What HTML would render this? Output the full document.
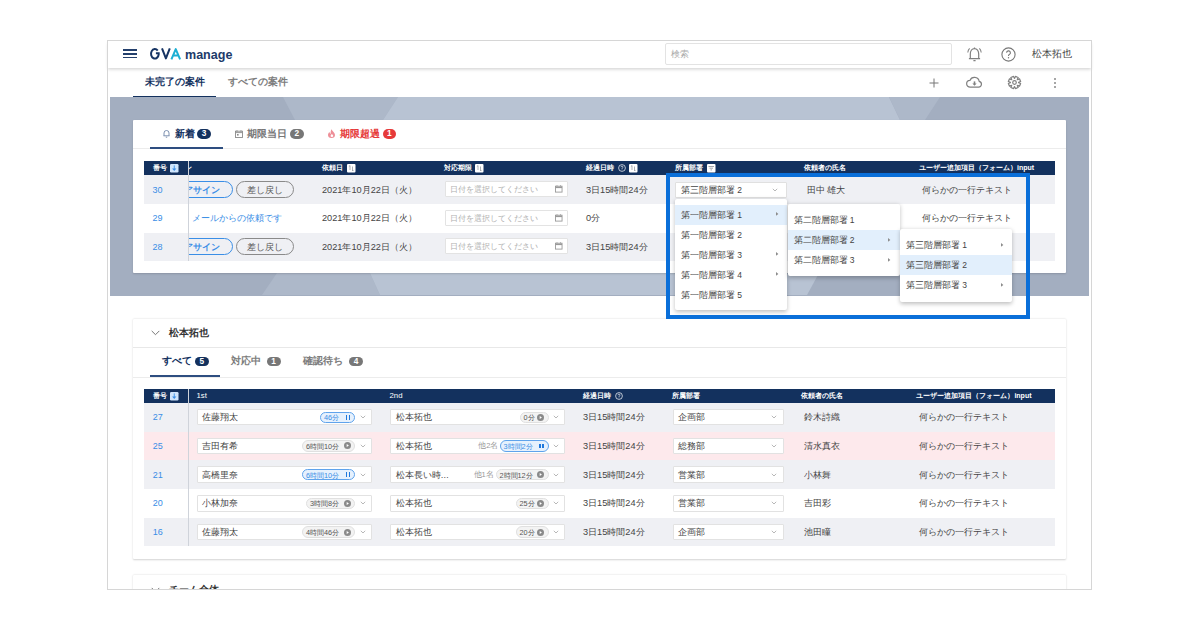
<!DOCTYPE html><html><head><meta charset="utf-8"><style>
*{margin:0;padding:0;box-sizing:border-box}
html,body{width:1200px;height:630px;background:#fff;overflow:hidden}
body{position:relative;font-family:"Liberation Sans",sans-serif;color:#333}
.a{position:absolute;white-space:nowrap}
svg{position:absolute;overflow:visible}
</style></head><body>
<div class="a" style="left:0;top:0;width:1200px;height:589px;overflow:hidden">
<div class="a" style="left:108px;top:41px;width:983px;height:27px;background:#fff;box-shadow:0 1.5px 3px rgba(0,0,0,.17)"></div>
<div class="a" style="left:123px;top:49.3px;width:13.5px;height:1.4px;background:#243f6c"></div>
<div class="a" style="left:123px;top:53.3px;width:13.5px;height:1.4px;background:#243f6c"></div>
<div class="a" style="left:123px;top:56.8px;width:13.5px;height:1.4px;background:#243f6c"></div>
<svg style="left:148px;top:46px" width="36" height="16" viewBox="0 0 36 16"><path d="M9.71 4.57A3.85 4.75 0 1 0 10.70 8.35V7.2H7.9" fill="none" stroke="#163463" stroke-width="2" stroke-linejoin="miter"/><path d="M14 2.4L17.9 12.4L21.8 2.4" fill="none" stroke="#163463" stroke-width="2" stroke-linejoin="round"/><path d="M23.4 13.3L27.75 3.1L32.1 13.3M25 9.4H30.5" fill="none" stroke="#1cafd3" stroke-width="2" stroke-linejoin="round"/></svg>
<div class="a" style="left:184.6px;top:45.5px;font-size:13.2px;line-height:18px;font-weight:bold;color:#1d3b6a;transform:scaleX(0.95);transform-origin:0 0">manage</div>
<div class="a" style="left:665px;top:43px;width:287px;height:21.5px;border:1px solid #e3e3e3;border-radius:2px;background:#fff"></div>
<div class="a" style="left:671px;top:48.0px;font-size:8.5px;line-height:12px;color:#aaa;font-weight:normal;">検索</div>
<svg style="left:967px;top:47px" width="15" height="15" viewBox="0 0 15 15"><path d="M7.5 0.4V1.6M3.3 11.6V7C3.3 4 5 1.6 7.5 1.6S11.7 4 11.7 7V11.6M1.9 11.7H13.1M6.4 13.6H8.6" fill="none" stroke="#808080" stroke-width="1.2"/><path d="M2.6 1.4Q0.9 3.2 0.8 5.6M12.4 1.4Q14.1 3.2 14.2 5.6" fill="none" stroke="#808080" stroke-width="1.05"/></svg>
<svg style="left:1001px;top:47px" width="15" height="15" viewBox="0 0 15 15"><circle cx="7.5" cy="7.5" r="6.6" fill="none" stroke="#777" stroke-width="1.1"/><path d="M5.6 5.8 a1.9 1.9 0 1 1 2.7 1.7 c-0.6 0.3 -0.8 0.7 -0.8 1.4" fill="none" stroke="#777" stroke-width="1.1"/><circle cx="7.5" cy="10.8" r="0.7" fill="#777"/></svg>
<div class="a" style="left:1032px;top:48.0px;font-size:10px;line-height:12px;color:#444;font-weight:normal;">松本拓也</div>
<div class="a" style="left:144.5px;top:76.0px;font-size:10px;line-height:12px;color:#13315e;font-weight:bold;">未完了の案件</div>
<div class="a" style="left:228px;top:76.0px;font-size:10px;line-height:12px;color:#7d7d7d;font-weight:bold;">すべての案件</div>
<div class="a" style="left:133px;top:95.5px;width:83px;height:1.6px;background:#13315e"></div>
<svg style="left:929px;top:78px" width="10" height="10" viewBox="0 0 10 10"><path d="M5 0.5V9.5M0.5 5H9.5" stroke="#777" stroke-width="1"/></svg>
<svg style="left:966px;top:77px" width="17" height="11" viewBox="0 0 17 11"><path d="M4.2 10.2H12.6a3 3 0 0 0 0.6-5.9a4.9 4.9 0 0 0-9.3-0.9a3.4 3.4 0 0 0 0.3 6.8z" fill="none" stroke="#808080" stroke-width="1.2"/><path d="M8.5 4.4V7.2" stroke="#808080" stroke-width="1.6"/><path d="M6.4 6.4L8.5 8.8L10.6 6.4z" fill="#808080"/></svg>
<svg style="left:1008px;top:76px" width="13" height="13" viewBox="0 0 13 13"><path d="M10.60 6.63 L12.63 7.44 L11.50 10.17 L9.49 9.30 L9.30 9.49 L10.17 11.50 L7.44 12.63 L6.63 10.60 L6.37 10.60 L5.56 12.63 L2.83 11.50 L3.70 9.49 L3.51 9.30 L1.50 10.17 L0.37 7.44 L2.40 6.63 L2.40 6.37 L0.37 5.56 L1.50 2.83 L3.51 3.70 L3.70 3.51 L2.83 1.50 L5.56 0.37 L6.37 2.40 L6.63 2.40 L7.44 0.37 L10.17 1.50 L9.30 3.51 L9.49 3.70 L11.50 2.83 L12.63 5.56 L10.60 6.37z" fill="none" stroke="#808080" stroke-width="1.2" stroke-linejoin="round"/><circle cx="6.5" cy="6.5" r="1.8" fill="none" stroke="#808080" stroke-width="1.2"/></svg>
<div class="a" style="left:1053.5px;top:77.55px;width:2.5px;height:2.5px;border-radius:50%;background:#888"></div>
<div class="a" style="left:1053.5px;top:81.55px;width:2.5px;height:2.5px;border-radius:50%;background:#888"></div>
<div class="a" style="left:1053.5px;top:85.55px;width:2.5px;height:2.5px;border-radius:50%;background:#888"></div>
<div class="a" style="left:110px;top:97px;width:979px;height:199px;background:#a3aec0"></div>
<svg style="left:0;top:0" width="1200" height="630" viewBox="0 0 1200 630"><polygon points="283,97 398,97 383,120 295,120" fill="#adb8c9"/><polygon points="398,97 889,97 900,120 383,120" fill="#b8c3d3"/><polygon points="889,97 940,97 925,120 900,120" fill="#adb8c9"/><polygon points="277,273 370,273 380,295 262,295" fill="#adb8c9"/><polygon points="370,273 819,273 807,295 380,295" fill="#b8c3d3"/></svg>
<div class="a" style="left:133px;top:120px;width:933px;height:153px;background:#fff;border-radius:1px;box-shadow:0 1px 2px rgba(0,0,0,.15)"></div>
<svg style="left:163px;top:129px" width="7" height="9" viewBox="0 0 7 9"><path d="M1 6.8V4a2.5 2.5 0 0 1 5 0v2.8M0.5 6.8h6M2.8 8.2h1.4" fill="none" stroke="#6f86a8" stroke-width="0.9"/></svg>
<div class="a" style="left:174.5px;top:127.5px;font-size:10px;line-height:12px;color:#13315e;font-weight:bold;">新着</div>
<div class="a" style="left:197px;top:129.3px;width:14px;height:9.4px;border-radius:5px;background:#13315e;color:#fff;font-size:8.3px;font-weight:bold;line-height:9.8px;text-align:center">3</div>
<svg style="left:235px;top:129.5px" width="8" height="8" viewBox="0 0 8 8"><rect x="0.5" y="1.2" width="7" height="6.3" fill="none" stroke="#8a8a8a" stroke-width="0.9"/><path d="M0.5 2.6h7M2 0.2v1.5M6 0.2v1.5" stroke="#8a8a8a" stroke-width="0.9"/><rect x="2" y="4" width="1.6" height="1.6" fill="#8a8a8a"/></svg>
<div class="a" style="left:247px;top:127.5px;font-size:10px;line-height:12px;color:#777;font-weight:bold;">期限当日</div>
<div class="a" style="left:290px;top:129.3px;width:13.5px;height:9.4px;border-radius:5px;background:#777;color:#fff;font-size:8.3px;font-weight:bold;line-height:9.8px;text-align:center">2</div>
<svg style="left:328px;top:129.2px" width="7" height="9" viewBox="0 0 7 9"><path fill-rule="evenodd" d="M3.4 0C3.7 1.8 7 3.6 7 6.1A3.5 2.9 0 0 1 0 6.1C0 4.6 0.8 3.6 1.5 3C1.6 4 2 4.6 2.6 4.9C2.6 3.1 2.8 1.4 3.4 0zM3.9 4.9C4.6 5.6 5.2 6.2 5.2 6.9A1.3 1.1 0 0 1 2.6 6.9C2.6 6.2 3.2 5.6 3.9 4.9z" fill="#ee8f98"/></svg>
<div class="a" style="left:339.5px;top:127.5px;font-size:10px;line-height:12px;color:#e63a3a;font-weight:bold;">期限超過</div>
<div class="a" style="left:382.5px;top:129.3px;width:13.5px;height:9.4px;border-radius:5px;background:#e63a3a;color:#fff;font-size:8.3px;font-weight:bold;line-height:9.8px;text-align:center">1</div>
<div class="a" style="left:133px;top:148px;width:933px;height:1px;background:#ececec"></div>
<div class="a" style="left:150px;top:146.5px;width:72.5px;height:2px;background:#2e4e80"></div>
<div class="a" style="left:144px;top:161px;width:910.7px;height:14px;background:#13315e"></div>
<div class="a" style="left:144px;top:175px;width:910.7px;height:29px;background:#eff0f4"></div>
<div class="a" style="left:144px;top:204px;width:910.7px;height:28.5px;background:#fff"></div>
<div class="a" style="left:144px;top:232.5px;width:910.7px;height:28.5px;background:#eff0f4"></div>
<div class="a" style="left:184.5px;top:161px;font-size:7px;line-height:14px;color:#fff;font-weight:bold">ン</div>
<div class="a" style="left:322px;top:161px;font-size:7px;line-height:14px;color:#fff;font-weight:bold">依頼日</div>
<svg style="left:346.7px;top:163.8px" width="8.5" height="8.5" viewBox="0 0 8.5 8.5"><rect width="8.5" height="8.5" rx="1" fill="#fff"/><path d="M3 1.5v4.5M1.9 2.6L3 1.5M5.5 7v-4.5M6.6 5.9L5.5 7" fill="none" stroke="#8a8f98" stroke-width="0.7"/></svg>
<div class="a" style="left:444px;top:161px;font-size:7px;line-height:14px;color:#fff;font-weight:bold">対応期限</div>
<svg style="left:475.3px;top:163.8px" width="8.5" height="8.5" viewBox="0 0 8.5 8.5"><rect width="8.5" height="8.5" rx="1" fill="#fff"/><path d="M3 1.5v4.5M1.9 2.6L3 1.5M5.5 7v-4.5M6.6 5.9L5.5 7" fill="none" stroke="#8a8f98" stroke-width="0.7"/></svg>
<div class="a" style="left:586px;top:161px;font-size:7px;line-height:14px;color:#fff;font-weight:bold">経過日時</div>
<svg style="left:617.5px;top:164px" width="8" height="8" viewBox="0 0 8 8"><circle cx="4" cy="4" r="3.4" fill="none" stroke="#fff" stroke-width="0.7"/><path d="M3 3.2a1 1 0 1 1 1.4 0.9c-0.3 0.2-0.4 0.4-0.4 0.8" fill="none" stroke="#fff" stroke-width="0.7"/><circle cx="4" cy="5.8" r="0.4" fill="#fff"/></svg>
<svg style="left:629px;top:163.8px" width="8.5" height="8.5" viewBox="0 0 8.5 8.5"><rect width="8.5" height="8.5" rx="1" fill="#fff"/><path d="M3 1.5v4.5M1.9 2.6L3 1.5M5.5 7v-4.5M6.6 5.9L5.5 7" fill="none" stroke="#8a8f98" stroke-width="0.7"/></svg>
<div class="a" style="left:675px;top:161px;font-size:7px;line-height:14px;color:#fff;font-weight:bold">所属部署</div>
<svg style="left:706.7px;top:163.8px" width="8.5" height="8.5" viewBox="0 0 8.5 8.5"><rect width="8.5" height="8.5" rx="1" fill="#fff"/><path d="M1.5 2.5h5.5M2.5 4.2h3.5M3.5 5.9h1.5" stroke="#8a8f98" stroke-width="0.8"/></svg>
<div class="a" style="left:804px;top:161px;font-size:7px;line-height:14px;color:#fff;font-weight:bold">依頼者の氏名</div>
<div class="a" style="left:919px;top:161px;font-size:7px;line-height:14px;color:#fff;font-weight:bold">ユーザー追加項目（フォーム）input</div>
<div class="a" style="left:444.5px;top:180.9px;width:123.7px;height:16.2px;background:#fff;border:1px solid #e3e3e3;border-radius:1px"></div>
<div class="a" style="left:449.5px;top:183.1px;font-size:8.45px;line-height:12px;color:#b0b0b0;font-weight:normal;">日付を選択してください</div>
<svg style="left:555px;top:185.1px" width="7.5" height="7.5" viewBox="0 0 7.5 7.5"><rect x="0.45" y="1.2" width="6.6" height="5.9" fill="none" stroke="#999" stroke-width="0.9"/><path d="M0.45 2.4h6.6" stroke="#999" stroke-width="1.4"/><path d="M2 0.2v1.2M5.5 0.2v1.2" stroke="#999" stroke-width="0.8"/></svg>
<div class="a" style="left:322px;top:183.5px;font-size:9.2px;line-height:12px;color:#444;font-weight:normal;">2021年10月22日（火）</div>
<div class="a" style="left:170px;top:181.0px;width:63px;height:17px;border:1px solid #3a8ee6;border-radius:9px;color:#3a8ee6;font-size:9px;line-height:16.5px;text-align:center;font-weight:bold">アサイン</div>
<div class="a" style="left:236px;top:181.0px;width:58px;height:17px;border:1px solid #8a8a8a;border-radius:9px;color:#555;font-size:9px;line-height:16.5px;text-align:center;font-weight:normal">差し戻し</div>
<div class="a" style="left:586px;top:183.5px;font-size:9.2px;line-height:12px;color:#444;font-weight:normal;">3日15時間24分</div>
<div class="a" style="left:144px;top:175px;width:44px;height:29px;background:#eff0f4"></div>
<div class="a" style="left:152.5px;top:183.5px;font-size:9px;line-height:12px;color:#3a8ee6;font-weight:normal;">30</div>
<div class="a" style="left:444.5px;top:209.65px;width:123.7px;height:16.2px;background:#fff;border:1px solid #e3e3e3;border-radius:1px"></div>
<div class="a" style="left:449.5px;top:211.85px;font-size:8.45px;line-height:12px;color:#b0b0b0;font-weight:normal;">日付を選択してください</div>
<svg style="left:555px;top:213.85px" width="7.5" height="7.5" viewBox="0 0 7.5 7.5"><rect x="0.45" y="1.2" width="6.6" height="5.9" fill="none" stroke="#999" stroke-width="0.9"/><path d="M0.45 2.4h6.6" stroke="#999" stroke-width="1.4"/><path d="M2 0.2v1.2M5.5 0.2v1.2" stroke="#999" stroke-width="0.8"/></svg>
<div class="a" style="left:322px;top:212.25px;font-size:9.2px;line-height:12px;color:#444;font-weight:normal;">2021年10月22日（火）</div>
<div class="a" style="left:192px;top:212.25px;font-size:8.5px;line-height:12px;color:#3a8ee6;font-weight:normal;">メールからの依頼です</div>
<div class="a" style="left:586px;top:212.25px;font-size:9.2px;line-height:12px;color:#444;font-weight:normal;">0分</div>
<div class="a" style="left:144px;top:204px;width:44px;height:28.5px;background:#fff"></div>
<div class="a" style="left:152.5px;top:212.25px;font-size:9px;line-height:12px;color:#3a8ee6;font-weight:normal;">29</div>
<div class="a" style="left:444.5px;top:238.15px;width:123.7px;height:16.2px;background:#fff;border:1px solid #e3e3e3;border-radius:1px"></div>
<div class="a" style="left:449.5px;top:240.35px;font-size:8.45px;line-height:12px;color:#b0b0b0;font-weight:normal;">日付を選択してください</div>
<svg style="left:555px;top:242.35px" width="7.5" height="7.5" viewBox="0 0 7.5 7.5"><rect x="0.45" y="1.2" width="6.6" height="5.9" fill="none" stroke="#999" stroke-width="0.9"/><path d="M0.45 2.4h6.6" stroke="#999" stroke-width="1.4"/><path d="M2 0.2v1.2M5.5 0.2v1.2" stroke="#999" stroke-width="0.8"/></svg>
<div class="a" style="left:322px;top:240.75px;font-size:9.2px;line-height:12px;color:#444;font-weight:normal;">2021年10月22日（火）</div>
<div class="a" style="left:170px;top:238.25px;width:63px;height:17px;border:1px solid #3a8ee6;border-radius:9px;color:#3a8ee6;font-size:9px;line-height:16.5px;text-align:center;font-weight:bold">アサイン</div>
<div class="a" style="left:236px;top:238.25px;width:58px;height:17px;border:1px solid #8a8a8a;border-radius:9px;color:#555;font-size:9px;line-height:16.5px;text-align:center;font-weight:normal">差し戻し</div>
<div class="a" style="left:586px;top:240.75px;font-size:9.2px;line-height:12px;color:#444;font-weight:normal;">3日15時間24分</div>
<div class="a" style="left:144px;top:232.5px;width:44px;height:28.5px;background:#eff0f4"></div>
<div class="a" style="left:152.5px;top:240.75px;font-size:9px;line-height:12px;color:#3a8ee6;font-weight:normal;">28</div>
<div class="a" style="left:675px;top:181.5px;width:111.5px;height:16px;background:#fff;border:1px solid #e0e0e0;border-radius:1px"></div>
<div class="a" style="left:681px;top:183.5px;font-size:8.5px;line-height:12px;color:#444;font-weight:normal;">第三階層部署 2</div>
<svg style="left:772px;top:187.5px" width="6" height="4" viewBox="0 0 6 4"><path d="M0.8 0.8L3 3L5.2 0.8" fill="none" stroke="#999" stroke-width="0.7"/></svg>
<div class="a" style="left:807px;top:183.5px;font-size:8.7px;line-height:12px;color:#444;font-weight:normal;">田中 雄大</div>
<div class="a" style="left:922px;top:183.5px;font-size:8.5px;line-height:12px;color:#444;font-weight:normal;">何らかの一行テキスト</div>
<div class="a" style="left:922px;top:212.3px;font-size:8.5px;line-height:12px;color:#444;font-weight:normal;">何らかの一行テキスト</div>
<div class="a" style="left:144px;top:161px;width:44px;height:14px;background:#13315e"></div>
<div class="a" style="left:153px;top:161px;font-size:7px;line-height:14px;color:#fff;font-weight:bold">番号</div>
<svg style="left:170px;top:163.8px" width="8.5" height="8.5" viewBox="0 0 8.5 8.5"><rect width="8.5" height="8.5" rx="1.2" fill="#cfe5fc"/><path d="M4.25 1.4v4.2" stroke="#3a8ee6" stroke-width="0.9"/><path d="M2.1 4.5L4.25 6.9L6.4 4.5z" fill="#3a8ee6"/></svg>
<div class="a" style="left:188px;top:161px;width:1px;height:100px;background:#cfd3da"></div>
<div class="a" style="left:133px;top:318.5px;width:933px;height:240px;background:#fff;border-radius:1px;box-shadow:0 0.5px 2px rgba(0,0,0,.18)"></div>
<svg style="left:151px;top:330px" width="9" height="6" viewBox="0 0 9 6"><path d="M0.7 0.9L4.5 4.7L8.3 0.9" fill="none" stroke="#777" stroke-width="1"/></svg>
<div class="a" style="left:168.5px;top:327.3px;font-size:10px;line-height:12px;color:#333;font-weight:bold;">松本拓也</div>
<div class="a" style="left:133px;top:347px;width:933px;height:1px;background:#e8e8e8"></div>
<div class="a" style="left:161.5px;top:355.3px;font-size:10px;line-height:12px;color:#13315e;font-weight:bold;">すべて</div>
<div class="a" style="left:195px;top:356.8px;width:13.5px;height:9.4px;border-radius:5px;background:#13315e;color:#fff;font-size:8.3px;font-weight:bold;line-height:9.8px;text-align:center">5</div>
<div class="a" style="left:231px;top:355.3px;font-size:10px;line-height:12px;color:#7d7d7d;font-weight:bold;">対応中</div>
<div class="a" style="left:266.5px;top:356.8px;width:14px;height:9.4px;border-radius:5px;background:#777;color:#fff;font-size:8.3px;font-weight:bold;line-height:9.8px;text-align:center">1</div>
<div class="a" style="left:303px;top:355.3px;font-size:10px;line-height:12px;color:#7d7d7d;font-weight:bold;">確認待ち</div>
<div class="a" style="left:349px;top:356.8px;width:14px;height:9.4px;border-radius:5px;background:#777;color:#fff;font-size:8.3px;font-weight:bold;line-height:9.8px;text-align:center">4</div>
<div class="a" style="left:133px;top:377px;width:933px;height:1px;background:#ececec"></div>
<div class="a" style="left:150px;top:375px;width:69.5px;height:2px;background:#2e4e80"></div>
<div class="a" style="left:144px;top:389px;width:910.7px;height:14px;background:#13315e"></div>
<div class="a" style="left:144px;top:403px;width:910.7px;height:28.600000000000023px;background:#eff0f4"></div>
<div class="a" style="left:144px;top:431.6px;width:910.7px;height:28.69999999999999px;background:#fde9ec"></div>
<div class="a" style="left:144px;top:460.3px;width:910.7px;height:28.69999999999999px;background:#eff0f4"></div>
<div class="a" style="left:144px;top:489px;width:910.7px;height:28.799999999999955px;background:#fff"></div>
<div class="a" style="left:144px;top:517.8px;width:910.7px;height:28.5px;background:#eff0f4"></div>
<div class="a" style="left:153px;top:389px;font-size:7px;line-height:14px;color:#fff;font-weight:bold">番号</div>
<svg style="left:170px;top:391.8px" width="8.5" height="8.5" viewBox="0 0 8.5 8.5"><rect width="8.5" height="8.5" rx="1.2" fill="#cfe5fc"/><path d="M4.25 1.4v4.2" stroke="#3a8ee6" stroke-width="0.9"/><path d="M2.1 4.5L4.25 6.9L6.4 4.5z" fill="#3a8ee6"/></svg>
<div class="a" style="left:196.5px;top:389px;font-size:7.8px;line-height:14px;color:#fff">1st</div>
<div class="a" style="left:389.5px;top:389px;font-size:7.8px;line-height:14px;color:#fff">2nd</div>
<div class="a" style="left:583.4px;top:389px;font-size:7px;line-height:14px;color:#fff;font-weight:bold">経過日時</div>
<svg style="left:615px;top:392px" width="8" height="8" viewBox="0 0 8 8"><circle cx="4" cy="4" r="3.4" fill="none" stroke="#fff" stroke-width="0.7"/><path d="M3 3.2a1 1 0 1 1 1.4 0.9c-0.3 0.2-0.4 0.4-0.4 0.8" fill="none" stroke="#fff" stroke-width="0.7"/><circle cx="4" cy="5.8" r="0.4" fill="#fff"/></svg>
<div class="a" style="left:672px;top:389px;font-size:7px;line-height:14px;color:#fff;font-weight:bold">所属部署</div>
<div class="a" style="left:801.4px;top:389px;font-size:7px;line-height:14px;color:#fff;font-weight:bold">依頼者の氏名</div>
<div class="a" style="left:916.4px;top:389px;font-size:7px;line-height:14px;color:#fff;font-weight:bold">ユーザー追加項目（フォーム）input</div>
<div class="a" style="left:188px;top:389px;width:1px;height:157.3px;background:#cfd3da"></div>
<div class="a" style="left:152.8px;top:411.3px;font-size:9px;line-height:12px;color:#3a8ee6;font-weight:normal;">27</div>
<div class="a" style="left:196.5px;top:409.1px;width:175.5px;height:16.4px;background:#fff;border:1px solid #e2e2e2;border-radius:1px"></div>
<div class="a" style="left:201.5px;top:411.3px;font-size:8.5px;line-height:12px;color:#444;font-weight:normal;">佐藤翔太</div>
<div class="a" style="left:320px;top:411.6px;width:35px;height:11.4px;border:1px solid #5fa3ec;background:#e6f1fd;border-radius:6px;color:#3a8ee6;font-size:7.3px;line-height:9.4px;padding-left:3px;padding-top:0.6px">46分</div>
<div class="a" style="left:345.7px;top:415.0px;width:1.7px;height:4.6px;background:#1f78dc"></div>
<div class="a" style="left:348.7px;top:415.0px;width:1.7px;height:4.6px;background:#1f78dc"></div>
<svg style="left:359.5px;top:415.3px" width="6" height="4" viewBox="0 0 6 4"><path d="M0.8 0.8L3 3L5.2 0.8" fill="none" stroke="#999" stroke-width="0.7"/></svg>
<div class="a" style="left:389.7px;top:409.1px;width:175.5px;height:16.4px;background:#fff;border:1px solid #e2e2e2;border-radius:1px"></div>
<div class="a" style="left:395.5px;top:411.3px;font-size:8.5px;line-height:12px;color:#444;font-weight:normal;">松本拓也</div>
<div class="a" style="left:519.5px;top:411.6px;width:29px;height:11.4px;border:1px solid #e0e0e0;background:#f3f3f3;border-radius:6px;color:#555;font-size:7.3px;line-height:9.4px;padding-left:3px;padding-top:0.6px">0分</div>
<svg style="left:537.0px;top:413.8px" width="7" height="7" viewBox="0 0 7 7"><circle cx="3.5" cy="3.5" r="3.5" fill="#8a8a8a"/><path d="M2.7 2L4.9 3.5L2.7 5z" fill="#fff"/></svg>
<svg style="left:553px;top:415.3px" width="6" height="4" viewBox="0 0 6 4"><path d="M0.8 0.8L3 3L5.2 0.8" fill="none" stroke="#999" stroke-width="0.7"/></svg>
<div class="a" style="left:583px;top:411.3px;font-size:9.2px;line-height:12px;color:#444;font-weight:normal;">3日15時間24分</div>
<div class="a" style="left:672.5px;top:409.1px;width:111px;height:16.4px;background:#fff;border:1px solid #e2e2e2;border-radius:1px"></div>
<div class="a" style="left:677.7px;top:411.3px;font-size:8.5px;line-height:12px;color:#444;font-weight:normal;">企画部</div>
<svg style="left:770.5px;top:415.3px" width="6" height="4" viewBox="0 0 6 4"><path d="M0.8 0.8L3 3L5.2 0.8" fill="none" stroke="#999" stroke-width="0.7"/></svg>
<div class="a" style="left:804px;top:411.3px;font-size:8.5px;line-height:12px;color:#444;font-weight:normal;">鈴木詩織</div>
<div class="a" style="left:919px;top:411.3px;font-size:8.5px;line-height:12px;color:#444;font-weight:normal;">何らかの一行テキスト</div>
<div class="a" style="left:152.8px;top:439.95000000000005px;font-size:9px;line-height:12px;color:#3a8ee6;font-weight:normal;">25</div>
<div class="a" style="left:196.5px;top:437.75000000000006px;width:175.5px;height:16.4px;background:#fff;border:1px solid #e2e2e2;border-radius:1px"></div>
<div class="a" style="left:201.5px;top:439.95000000000005px;font-size:8.5px;line-height:12px;color:#444;font-weight:normal;">吉田有希</div>
<div class="a" style="left:302px;top:440.25000000000006px;width:53px;height:11.4px;border:1px solid #e0e0e0;background:#f3f3f3;border-radius:6px;color:#555;font-size:7.3px;line-height:9.4px;padding-left:3px;padding-top:0.6px">6時間10分</div>
<svg style="left:343.5px;top:442.45000000000005px" width="7" height="7" viewBox="0 0 7 7"><circle cx="3.5" cy="3.5" r="3.5" fill="#8a8a8a"/><path d="M2.7 2L4.9 3.5L2.7 5z" fill="#fff"/></svg>
<svg style="left:359.5px;top:443.95000000000005px" width="6" height="4" viewBox="0 0 6 4"><path d="M0.8 0.8L3 3L5.2 0.8" fill="none" stroke="#999" stroke-width="0.7"/></svg>
<div class="a" style="left:389.7px;top:437.75000000000006px;width:175.5px;height:16.4px;background:#fff;border:1px solid #e2e2e2;border-radius:1px"></div>
<div class="a" style="left:395.5px;top:439.95000000000005px;font-size:8.5px;line-height:12px;color:#444;font-weight:normal;">松本拓也</div>
<div class="a" style="left:478.3px;top:439.95000000000005px;font-size:7.5px;line-height:12px;color:#999;font-weight:normal;">他2名</div>
<div class="a" style="left:499.5px;top:440.25000000000006px;width:49px;height:11.4px;border:1px solid #5fa3ec;background:#e6f1fd;border-radius:6px;color:#3a8ee6;font-size:7.3px;line-height:9.4px;padding-left:3px;padding-top:0.6px">3時間2分</div>
<div class="a" style="left:539.2px;top:443.65000000000003px;width:1.7px;height:4.6px;background:#1f78dc"></div>
<div class="a" style="left:542.2px;top:443.65000000000003px;width:1.7px;height:4.6px;background:#1f78dc"></div>
<svg style="left:553px;top:443.95000000000005px" width="6" height="4" viewBox="0 0 6 4"><path d="M0.8 0.8L3 3L5.2 0.8" fill="none" stroke="#999" stroke-width="0.7"/></svg>
<div class="a" style="left:583px;top:439.95000000000005px;font-size:9.2px;line-height:12px;color:#444;font-weight:normal;">3日15時間24分</div>
<div class="a" style="left:672.5px;top:437.75000000000006px;width:111px;height:16.4px;background:#fff;border:1px solid #e2e2e2;border-radius:1px"></div>
<div class="a" style="left:677.7px;top:439.95000000000005px;font-size:8.5px;line-height:12px;color:#444;font-weight:normal;">総務部</div>
<svg style="left:770.5px;top:443.95000000000005px" width="6" height="4" viewBox="0 0 6 4"><path d="M0.8 0.8L3 3L5.2 0.8" fill="none" stroke="#999" stroke-width="0.7"/></svg>
<div class="a" style="left:804px;top:439.95000000000005px;font-size:8.5px;line-height:12px;color:#444;font-weight:normal;">清水真衣</div>
<div class="a" style="left:919px;top:439.95000000000005px;font-size:8.5px;line-height:12px;color:#444;font-weight:normal;">何らかの一行テキスト</div>
<div class="a" style="left:152.8px;top:468.65px;font-size:9px;line-height:12px;color:#3a8ee6;font-weight:normal;">21</div>
<div class="a" style="left:196.5px;top:466.45px;width:175.5px;height:16.4px;background:#fff;border:1px solid #e2e2e2;border-radius:1px"></div>
<div class="a" style="left:201.5px;top:468.65px;font-size:8.5px;line-height:12px;color:#444;font-weight:normal;">高橋里奈</div>
<div class="a" style="left:302px;top:468.95px;width:53px;height:11.4px;border:1px solid #5fa3ec;background:#e6f1fd;border-radius:6px;color:#3a8ee6;font-size:7.3px;line-height:9.4px;padding-left:3px;padding-top:0.6px">6時間10分</div>
<div class="a" style="left:345.7px;top:472.34999999999997px;width:1.7px;height:4.6px;background:#1f78dc"></div>
<div class="a" style="left:348.7px;top:472.34999999999997px;width:1.7px;height:4.6px;background:#1f78dc"></div>
<svg style="left:359.5px;top:472.65px" width="6" height="4" viewBox="0 0 6 4"><path d="M0.8 0.8L3 3L5.2 0.8" fill="none" stroke="#999" stroke-width="0.7"/></svg>
<div class="a" style="left:389.7px;top:466.45px;width:175.5px;height:16.4px;background:#fff;border:1px solid #e2e2e2;border-radius:1px"></div>
<div class="a" style="left:395.5px;top:468.65px;font-size:8.5px;line-height:12px;color:#444;font-weight:normal;">松本長い時…</div>
<div class="a" style="left:473.5px;top:468.65px;font-size:7.5px;line-height:12px;color:#999;font-weight:normal;">他1名</div>
<div class="a" style="left:495.5px;top:468.95px;width:53px;height:11.4px;border:1px solid #e0e0e0;background:#f3f3f3;border-radius:6px;color:#555;font-size:7.3px;line-height:9.4px;padding-left:3px;padding-top:0.6px">2時間12分</div>
<svg style="left:537.0px;top:471.15px" width="7" height="7" viewBox="0 0 7 7"><circle cx="3.5" cy="3.5" r="3.5" fill="#8a8a8a"/><path d="M2.7 2L4.9 3.5L2.7 5z" fill="#fff"/></svg>
<svg style="left:553px;top:472.65px" width="6" height="4" viewBox="0 0 6 4"><path d="M0.8 0.8L3 3L5.2 0.8" fill="none" stroke="#999" stroke-width="0.7"/></svg>
<div class="a" style="left:583px;top:468.65px;font-size:9.2px;line-height:12px;color:#444;font-weight:normal;">3日15時間24分</div>
<div class="a" style="left:672.5px;top:466.45px;width:111px;height:16.4px;background:#fff;border:1px solid #e2e2e2;border-radius:1px"></div>
<div class="a" style="left:677.7px;top:468.65px;font-size:8.5px;line-height:12px;color:#444;font-weight:normal;">営業部</div>
<svg style="left:770.5px;top:472.65px" width="6" height="4" viewBox="0 0 6 4"><path d="M0.8 0.8L3 3L5.2 0.8" fill="none" stroke="#999" stroke-width="0.7"/></svg>
<div class="a" style="left:804px;top:468.65px;font-size:8.5px;line-height:12px;color:#444;font-weight:normal;">小林舞</div>
<div class="a" style="left:919px;top:468.65px;font-size:8.5px;line-height:12px;color:#444;font-weight:normal;">何らかの一行テキスト</div>
<div class="a" style="left:152.8px;top:497.4px;font-size:9px;line-height:12px;color:#3a8ee6;font-weight:normal;">20</div>
<div class="a" style="left:196.5px;top:495.2px;width:175.5px;height:16.4px;background:#fff;border:1px solid #e2e2e2;border-radius:1px"></div>
<div class="a" style="left:201.5px;top:497.4px;font-size:8.5px;line-height:12px;color:#444;font-weight:normal;">小林加奈</div>
<div class="a" style="left:306px;top:497.7px;width:49px;height:11.4px;border:1px solid #e0e0e0;background:#f3f3f3;border-radius:6px;color:#555;font-size:7.3px;line-height:9.4px;padding-left:3px;padding-top:0.6px">3時間8分</div>
<svg style="left:343.5px;top:499.9px" width="7" height="7" viewBox="0 0 7 7"><circle cx="3.5" cy="3.5" r="3.5" fill="#8a8a8a"/><path d="M2.7 2L4.9 3.5L2.7 5z" fill="#fff"/></svg>
<svg style="left:359.5px;top:501.4px" width="6" height="4" viewBox="0 0 6 4"><path d="M0.8 0.8L3 3L5.2 0.8" fill="none" stroke="#999" stroke-width="0.7"/></svg>
<div class="a" style="left:389.7px;top:495.2px;width:175.5px;height:16.4px;background:#fff;border:1px solid #e2e2e2;border-radius:1px"></div>
<div class="a" style="left:395.5px;top:497.4px;font-size:8.5px;line-height:12px;color:#444;font-weight:normal;">松本拓也</div>
<div class="a" style="left:515.5px;top:497.7px;width:33px;height:11.4px;border:1px solid #e0e0e0;background:#f3f3f3;border-radius:6px;color:#555;font-size:7.3px;line-height:9.4px;padding-left:3px;padding-top:0.6px">25分</div>
<svg style="left:537.0px;top:499.9px" width="7" height="7" viewBox="0 0 7 7"><circle cx="3.5" cy="3.5" r="3.5" fill="#8a8a8a"/><path d="M2.7 2L4.9 3.5L2.7 5z" fill="#fff"/></svg>
<svg style="left:553px;top:501.4px" width="6" height="4" viewBox="0 0 6 4"><path d="M0.8 0.8L3 3L5.2 0.8" fill="none" stroke="#999" stroke-width="0.7"/></svg>
<div class="a" style="left:583px;top:497.4px;font-size:9.2px;line-height:12px;color:#444;font-weight:normal;">3日15時間24分</div>
<div class="a" style="left:672.5px;top:495.2px;width:111px;height:16.4px;background:#fff;border:1px solid #e2e2e2;border-radius:1px"></div>
<div class="a" style="left:677.7px;top:497.4px;font-size:8.5px;line-height:12px;color:#444;font-weight:normal;">営業部</div>
<svg style="left:770.5px;top:501.4px" width="6" height="4" viewBox="0 0 6 4"><path d="M0.8 0.8L3 3L5.2 0.8" fill="none" stroke="#999" stroke-width="0.7"/></svg>
<div class="a" style="left:804px;top:497.4px;font-size:8.5px;line-height:12px;color:#444;font-weight:normal;">吉田彩</div>
<div class="a" style="left:919px;top:497.4px;font-size:8.5px;line-height:12px;color:#444;font-weight:normal;">何らかの一行テキスト</div>
<div class="a" style="left:152.8px;top:526.05px;font-size:9px;line-height:12px;color:#3a8ee6;font-weight:normal;">16</div>
<div class="a" style="left:196.5px;top:523.8499999999999px;width:175.5px;height:16.4px;background:#fff;border:1px solid #e2e2e2;border-radius:1px"></div>
<div class="a" style="left:201.5px;top:526.05px;font-size:8.5px;line-height:12px;color:#444;font-weight:normal;">佐藤翔太</div>
<div class="a" style="left:302px;top:526.3499999999999px;width:53px;height:11.4px;border:1px solid #e0e0e0;background:#f3f3f3;border-radius:6px;color:#555;font-size:7.3px;line-height:9.4px;padding-left:3px;padding-top:0.6px">4時間46分</div>
<svg style="left:343.5px;top:528.55px" width="7" height="7" viewBox="0 0 7 7"><circle cx="3.5" cy="3.5" r="3.5" fill="#8a8a8a"/><path d="M2.7 2L4.9 3.5L2.7 5z" fill="#fff"/></svg>
<svg style="left:359.5px;top:530.05px" width="6" height="4" viewBox="0 0 6 4"><path d="M0.8 0.8L3 3L5.2 0.8" fill="none" stroke="#999" stroke-width="0.7"/></svg>
<div class="a" style="left:389.7px;top:523.8499999999999px;width:175.5px;height:16.4px;background:#fff;border:1px solid #e2e2e2;border-radius:1px"></div>
<div class="a" style="left:395.5px;top:526.05px;font-size:8.5px;line-height:12px;color:#444;font-weight:normal;">松本拓也</div>
<div class="a" style="left:515.5px;top:526.3499999999999px;width:33px;height:11.4px;border:1px solid #e0e0e0;background:#f3f3f3;border-radius:6px;color:#555;font-size:7.3px;line-height:9.4px;padding-left:3px;padding-top:0.6px">20分</div>
<svg style="left:537.0px;top:528.55px" width="7" height="7" viewBox="0 0 7 7"><circle cx="3.5" cy="3.5" r="3.5" fill="#8a8a8a"/><path d="M2.7 2L4.9 3.5L2.7 5z" fill="#fff"/></svg>
<svg style="left:553px;top:530.05px" width="6" height="4" viewBox="0 0 6 4"><path d="M0.8 0.8L3 3L5.2 0.8" fill="none" stroke="#999" stroke-width="0.7"/></svg>
<div class="a" style="left:583px;top:526.05px;font-size:9.2px;line-height:12px;color:#444;font-weight:normal;">3日15時間24分</div>
<div class="a" style="left:672.5px;top:523.8499999999999px;width:111px;height:16.4px;background:#fff;border:1px solid #e2e2e2;border-radius:1px"></div>
<div class="a" style="left:677.7px;top:526.05px;font-size:8.5px;line-height:12px;color:#444;font-weight:normal;">企画部</div>
<svg style="left:770.5px;top:530.05px" width="6" height="4" viewBox="0 0 6 4"><path d="M0.8 0.8L3 3L5.2 0.8" fill="none" stroke="#999" stroke-width="0.7"/></svg>
<div class="a" style="left:804px;top:526.05px;font-size:8.5px;line-height:12px;color:#444;font-weight:normal;">池田瞳</div>
<div class="a" style="left:919px;top:526.05px;font-size:8.5px;line-height:12px;color:#444;font-weight:normal;">何らかの一行テキスト</div>
<div class="a" style="left:133px;top:575px;width:933px;height:60px;background:#fff;border-radius:1px;box-shadow:0 0.5px 2px rgba(0,0,0,.18)"></div>
<svg style="left:151px;top:587px" width="9" height="6" viewBox="0 0 9 6"><path d="M0.7 0.9L4.5 4.7L8.3 0.9" fill="none" stroke="#777" stroke-width="1"/></svg>
<div class="a" style="left:168.5px;top:584.0px;font-size:10px;line-height:12px;color:#333;font-weight:bold;">チーム全体</div>
<div class="a" style="left:675px;top:198.5px;width:112px;height:111.5px;background:#fff;border-radius:2px;box-shadow:0 1.5px 4px rgba(0,0,0,.25)"></div>
<div class="a" style="left:675px;top:204.5px;width:112px;height:20px;background:#e2effc"></div>
<div class="a" style="left:681px;top:208.5px;font-size:8.5px;line-height:12px;color:#444;font-weight:normal;">第一階層部署 1</div>
<svg style="left:775.6px;top:212.1px" width="2.4" height="3.8" viewBox="0 0 2.4 3.8"><path d="M0 0L2.4 1.9L0 3.8z" fill="#8c8c8c"/></svg>
<div class="a" style="left:681px;top:228.5px;font-size:8.5px;line-height:12px;color:#444;font-weight:normal;">第一階層部署 2</div>
<div class="a" style="left:681px;top:248.5px;font-size:8.5px;line-height:12px;color:#444;font-weight:normal;">第一階層部署 3</div>
<svg style="left:775.6px;top:252.1px" width="2.4" height="3.8" viewBox="0 0 2.4 3.8"><path d="M0 0L2.4 1.9L0 3.8z" fill="#8c8c8c"/></svg>
<div class="a" style="left:681px;top:268.5px;font-size:8.5px;line-height:12px;color:#444;font-weight:normal;">第一階層部署 4</div>
<svg style="left:775.6px;top:272.1px" width="2.4" height="3.8" viewBox="0 0 2.4 3.8"><path d="M0 0L2.4 1.9L0 3.8z" fill="#8c8c8c"/></svg>
<div class="a" style="left:681px;top:288.5px;font-size:8.5px;line-height:12px;color:#444;font-weight:normal;">第一階層部署 5</div>
<div class="a" style="left:787.5px;top:204px;width:112px;height:72px;background:#fff;border-radius:2px;box-shadow:0 1.5px 4px rgba(0,0,0,.25)"></div>
<div class="a" style="left:793.5px;top:214.0px;font-size:8.5px;line-height:12px;color:#444;font-weight:normal;">第二階層部署 1</div>
<div class="a" style="left:787.5px;top:230px;width:112px;height:20px;background:#e2effc"></div>
<div class="a" style="left:793.5px;top:234.0px;font-size:8.5px;line-height:12px;color:#444;font-weight:normal;">第二階層部署 2</div>
<svg style="left:888.1px;top:237.6px" width="2.4" height="3.8" viewBox="0 0 2.4 3.8"><path d="M0 0L2.4 1.9L0 3.8z" fill="#8c8c8c"/></svg>
<div class="a" style="left:793.5px;top:254.0px;font-size:8.5px;line-height:12px;color:#444;font-weight:normal;">第二階層部署 3</div>
<svg style="left:888.1px;top:257.6px" width="2.4" height="3.8" viewBox="0 0 2.4 3.8"><path d="M0 0L2.4 1.9L0 3.8z" fill="#8c8c8c"/></svg>
<div class="a" style="left:900px;top:229px;width:112px;height:72.5px;background:#fff;border-radius:2px;box-shadow:0 1.5px 4px rgba(0,0,0,.25)"></div>
<div class="a" style="left:906px;top:239.0px;font-size:8.5px;line-height:12px;color:#444;font-weight:normal;">第三階層部署 1</div>
<svg style="left:1000.6px;top:242.6px" width="2.4" height="3.8" viewBox="0 0 2.4 3.8"><path d="M0 0L2.4 1.9L0 3.8z" fill="#8c8c8c"/></svg>
<div class="a" style="left:900px;top:255px;width:112px;height:20px;background:#e2effc"></div>
<div class="a" style="left:906px;top:259.0px;font-size:8.5px;line-height:12px;color:#444;font-weight:normal;">第三階層部署 2</div>
<div class="a" style="left:906px;top:279.0px;font-size:8.5px;line-height:12px;color:#444;font-weight:normal;">第三階層部署 3</div>
<svg style="left:1000.6px;top:282.6px" width="2.4" height="3.8" viewBox="0 0 2.4 3.8"><path d="M0 0L2.4 1.9L0 3.8z" fill="#8c8c8c"/></svg>
<div class="a" style="left:666px;top:173px;width:364px;height:146px;border:4px solid #0a6fd9"></div>
</div>
<div class="a" style="left:107px;top:40px;width:985px;height:550px;border:1px solid #d6d6d6;pointer-events:none"></div>
</body></html>
